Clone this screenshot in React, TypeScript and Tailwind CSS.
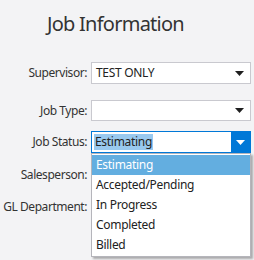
import { useState } from "react";

const font = { fontFamily: '"Noto Sans", "Open Sans", sans-serif' };

function Caret({ color = "#1f1f1f" }: { color?: string }) {
  return (
    <svg width="9" height="5" viewBox="0 0 9 5">
      <path d="M0 0 H9 L4.5 5 Z" fill={color} />
    </svg>
  );
}

function Row({ label, className, children }: { label: string; className: string; children?: React.ReactNode }) {
  return (
    <div className={`flex items-center ${className}`}>
      <div className="w-[87px] shrink-0 whitespace-nowrap text-right text-[12px] tracking-[-0.45px] text-[#333]">{label}</div>
      <div className="ml-[4px] w-[160px]">{children}</div>
    </div>
  );
}

export default function App() {
  const [options] = useState(["Estimating", "Accepted/Pending", "In Progress", "Completed", "Billed"]);

  return (
    <div className="h-[260px] w-[254px] overflow-hidden bg-[#f3f3f5]" style={font}>
      <h1 className="pl-[47px] pt-[10px] text-[20px] leading-[28px] tracking-[-0.75px] text-[#333]">Job Information</h1>
      <div className="pt-[24px]">
        <Row label="Supervisor:" className="h-[22px]">
          <div className="flex h-[22px] items-center justify-between border border-[#c9c9cf] bg-white pl-[4px] pr-[6px] text-[12px] tracking-[-0.3px] text-[#222]">
            <span>TEST ONLY</span>
            <Caret />
          </div>
        </Row>
        <Row label="Job Type:" className="mt-[16px] h-[21px]">
          <div className="flex h-[21px] items-center justify-end border border-[#c9c9cf] bg-white pr-[6px]">
            <Caret />
          </div>
        </Row>
        <Row label="Job Status:" className="mt-[10px] h-[22px]">
          <div className="relative">
            <div className="flex h-[22px] items-stretch border border-[#0078d7] bg-white">
              <div className="flex flex-1 items-center pl-[2px]">
                <span className="bg-[#99c9ef] px-[1px] text-[12px] leading-[16px] tracking-[-0.3px] text-[#222]">Estimating</span>
              </div>
              <div className="flex w-[19px] items-center justify-center bg-[#0078d7]">
                <Caret color="#ffffff" />
              </div>
            </div>
            <div className="absolute left-0 top-[22px] z-10 w-[160px] border border-[#b5b5bb] bg-white py-[1px] shadow-[2px_2px_2px_rgba(0,0,0,0.3)]">
              {options.map((o, i) => (
                <div
                  key={o}
                  className={`flex h-[20px] items-center px-[4px] text-[12px] tracking-[-0.3px] ${i === 0 ? "bg-[#63aee0] text-white" : "text-[#222]"}`}
                >
                  {o}
                </div>
              ))}
            </div>
          </div>
        </Row>
        <Row label="Salesperson:" className="mt-[11px] h-[22px]" />
        <Row label="GL Department:" className="mt-[10px] h-[22px]" />
      </div>
    </div>
  );
}
